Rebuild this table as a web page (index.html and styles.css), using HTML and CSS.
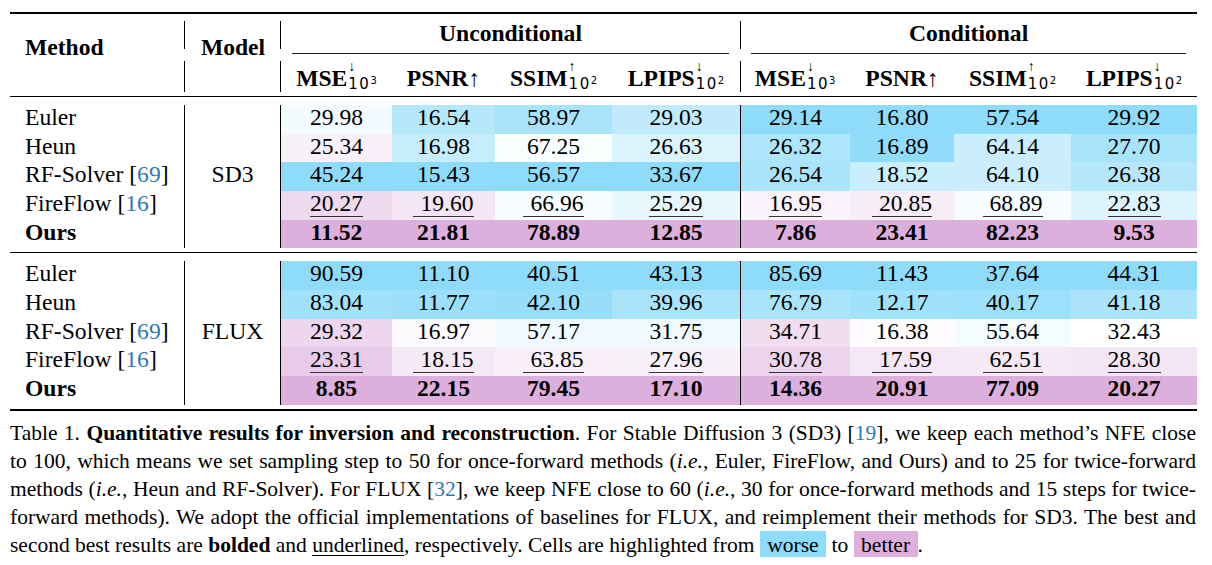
FILE: index.html
```html
<!DOCTYPE html>
<html lang="en">
<head>
<meta charset="utf-8">
<title>Table 1. Quantitative results for inversion and reconstruction</title>
<link rel="stylesheet" href="styles.css">
</head>
<body>
<main class="page">
<table class="results">
<colgroup>
<col class="c-method"><col class="c-model">
<col class="c-mse"><col class="c-psnr"><col class="c-ssim"><col class="c-lpips">
<col class="c-mse2"><col class="c-psnr2"><col class="c-ssim2"><col class="c-lpips2">
</colgroup>
<thead>
<tr class="h1">
<th rowspan="2" class="h-method seg-r">Method</th>
<th rowspan="2" class="h-model seg-r">Model</th>
<th colspan="4" class="h-group"><div class="lbl">Unconditional</div></th>
<th colspan="4" class="h-group seg-l1"><div class="lbl">Conditional</div></th>
</tr>
<tr class="h2">
<th>MSE<span class="ss"><span class="ss-up">↓</span><span class="ss-dn">10<sup>3</sup></span></span></th>
<th>PSNR<span class="arr">↑</span></th>
<th>SSIM<span class="ss"><span class="ss-up">↑</span><span class="ss-dn">10<sup>2</sup></span></span></th>
<th>LPIPS<span class="ss"><span class="ss-up">↓</span><span class="ss-dn">10<sup>2</sup></span></span></th>
<th class="seg-l2">MSE<span class="ss"><span class="ss-up">↓</span><span class="ss-dn">10<sup>3</sup></span></span></th>
<th>PSNR<span class="arr">↑</span></th>
<th>SSIM<span class="ss"><span class="ss-up">↑</span><span class="ss-dn">10<sup>2</sup></span></span></th>
<th>LPIPS<span class="ss"><span class="ss-up">↓</span><span class="ss-dn">10<sup>2</sup></span></span></th>
</tr>
</thead>
<tbody>
<tr class="gap-top"><td colspan="10"></td></tr>
<tr class="r">
<td class="m">Euler</td>
<td class="mdl" rowspan="5">SD3</td>
<td class="v b" style="--t:10%">29.98</td>
<td class="v b" style="--t:65%">16.54</td>
<td class="v b" style="--t:78%">58.97</td>
<td class="v b" style="--t:55%">29.03</td>
<td class="v b cs">29.14</td>
<td class="v b">16.80</td>
<td class="v b">57.54</td>
<td class="v b">29.92</td>
</tr>
<tr class="r">
<td class="m">Heun</td>
<td class="v p" style="--t:18%">25.34</td>
<td class="v b" style="--t:51%">16.98</td>
<td class="v b" style="--t:4%">67.25</td>
<td class="v b" style="--t:32%">26.63</td>
<td class="v b cs" style="--t:73%">26.32</td>
<td class="v b" style="--t:97%">16.89</td>
<td class="v b" style="--t:47%">64.14</td>
<td class="v b" style="--t:78%">27.70</td>
</tr>
<tr class="r">
<td class="m">RF-Solver [<span class="cite">69</span>]</td>
<td class="v b">45.24</td>
<td class="v b">15.43</td>
<td class="v b">56.57</td>
<td class="v b">33.67</td>
<td class="v b cs" style="--t:76%">26.54</td>
<td class="v b" style="--t:48%">18.52</td>
<td class="v b" style="--t:47%">64.10</td>
<td class="v b" style="--t:65%">26.38</td>
</tr>
<tr class="r">
<td class="m">FireFlow [<span class="cite">16</span>]</td>
<td class="v p" style="--t:48%"><span class="u">20.27</span></td>
<td class="v p" style="--t:31%"><span class="u lead">19.60</span></td>
<td class="v b" style="--t:7%"><span class="u lead">66.96</span></td>
<td class="v b" style="--t:20%"><span class="u">25.29</span></td>
<td class="v p cs" style="--t:15%"><span class="u">16.95</span></td>
<td class="v p" style="--t:23%"><span class="u lead">20.85</span></td>
<td class="v b" style="--t:8%"><span class="u lead">68.89</span></td>
<td class="v b" style="--t:30%"><span class="u">22.83</span></td>
</tr>
<tr class="r best">
<td class="m">Ours</td>
<td class="v p">11.52</td>
<td class="v p">21.81</td>
<td class="v p">78.89</td>
<td class="v p">12.85</td>
<td class="v p cs">7.86</td>
<td class="v p">23.41</td>
<td class="v p">82.23</td>
<td class="v p">9.53</td>
</tr>
<tr class="gap-bot"><td colspan="10"></td></tr>
</tbody>
<tbody>
<tr class="gap-top"><td colspan="10"></td></tr>
<tr class="r">
<td class="m">Euler</td>
<td class="mdl" rowspan="5">FLUX</td>
<td class="v b">90.59</td>
<td class="v b">11.10</td>
<td class="v b">40.51</td>
<td class="v b">43.13</td>
<td class="v b cs">85.69</td>
<td class="v b">11.43</td>
<td class="v b">37.64</td>
<td class="v b">44.31</td>
</tr>
<tr class="r">
<td class="m">Heun</td>
<td class="v b" style="--t:82%">83.04</td>
<td class="v b" style="--t:88%">11.77</td>
<td class="v b" style="--t:92%">42.10</td>
<td class="v b" style="--t:76%">39.96</td>
<td class="v b cs" style="--t:75%">76.79</td>
<td class="v b" style="--t:84%">12.17</td>
<td class="v b" style="--t:87%">40.17</td>
<td class="v b" style="--t:74%">41.18</td>
</tr>
<tr class="r">
<td class="m">RF-Solver [<span class="cite">69</span>]</td>
<td class="v p" style="--t:50%">29.32</td>
<td class="v p" style="--t:6%">16.97</td>
<td class="v b" style="--t:15%">57.17</td>
<td class="v b" style="--t:13%">31.75</td>
<td class="v p cs" style="--t:43%">34.71</td>
<td class="v p" style="--t:4%">16.38</td>
<td class="v b" style="--t:9%">55.64</td>
<td class="v b" style="--t:1%">32.43</td>
</tr>
<tr class="r">
<td class="m">FireFlow [<span class="cite">16</span>]</td>
<td class="v p" style="--t:65%"><span class="u">23.31</span></td>
<td class="v p" style="--t:28%"><span class="u lead">18.15</span></td>
<td class="v p" style="--t:20%"><span class="u lead">63.85</span></td>
<td class="v p" style="--t:17%"><span class="u">27.96</span></td>
<td class="v p cs" style="--t:54%"><span class="u">30.78</span></td>
<td class="v p" style="--t:30%"><span class="u lead">17.59</span></td>
<td class="v p" style="--t:26%"><span class="u lead">62.51</span></td>
<td class="v p" style="--t:33%"><span class="u">28.30</span></td>
</tr>
<tr class="r best">
<td class="m">Ours</td>
<td class="v p">8.85</td>
<td class="v p">22.15</td>
<td class="v p">79.45</td>
<td class="v p">17.10</td>
<td class="v p cs">14.36</td>
<td class="v p">20.91</td>
<td class="v p">77.09</td>
<td class="v p">20.27</td>
</tr>
<tr class="gap-bot gap-end"><td colspan="10"></td></tr>
</tbody>
</table>
<p class="caption">
<span class="cap-line">Table 1. <b>Quantitative results for inversion and reconstruction</b>. For Stable Diffusion 3 (SD3) [<span class="cite">19</span>], we keep each method’s NFE close</span>
<span class="cap-line">to 100, which means we set sampling step to 50 for once-forward methods (<i>i.e.</i>, Euler, FireFlow, and Ours) and to 25 for twice-forward</span>
<span class="cap-line">methods (<i>i.e.</i>, Heun and RF-Solver). For FLUX [<span class="cite">32</span>], we keep NFE close to 60 (<i>i.e.</i>, 30 for once-forward methods and 15 steps for twice-</span>
<span class="cap-line">forward methods). We adopt the official implementations of baselines for FLUX, and reimplement their methods for SD3. The best and</span>
<span class="cap-line last">second best results are <b>bolded</b> and <u>underlined</u>, respectively. Cells are highlighted from <span class="hl hl-worse">worse</span> to <span class="hl hl-better">better</span>.</span>
</p>
</main>
</body>
</html>
```

FILE: styles.css
```css
* { box-sizing: border-box; }

body {
  margin: 0;
  background: #fff;
  color: #000;
  font-family: "Liberation Serif", "Times New Roman", serif;
}

.page {
  width: 1212px;
  padding: 12px 0 0 10px;
}

/* ---------- table ---------- */
.results {
  width: 1187px;
  table-layout: fixed;
  border-collapse: separate;
  border-spacing: 0;
  font-size: 23.6px;
}

.c-method { width: 175px; }
.c-model  { width: 96px; }
.c-mse    { width: 111px; }
.c-psnr   { width: 103px; }
.c-ssim   { width: 117px; }
.c-lpips  { width: 128px; }
.c-mse2   { width: 110px; }
.c-psnr2  { width: 104px; }
.c-ssim2  { width: 117px; }
.c-lpips2 { width: 126px; }

.results th {
  padding: 0;
  font-weight: bold;
  vertical-align: top;
  text-align: center;
  white-space: nowrap;
}

.results .h1 th { border-top: 2px solid #000; }

.results th.h-method,
.results th.h-model {
  padding-top: 20px;
  line-height: 27px;
}
.results th.h-method { text-align: left; padding-left: 15px; }

.results th.h-group { padding-top: 6.4px; line-height: 27px; }
.h-group .lbl {
  margin: 0 11px;
  padding-bottom: 5.6px;
  border-bottom: 1px solid #222;
}

.results .h2 th {
  height: 42px;
  line-height: 27px;
  padding: 4.8px 0 0;
  vertical-align: baseline;
}

/* broken vertical rules in the header */
.results th.seg-r {
  background:
    linear-gradient(#000, #000) right 0 top 7px / 1px 28px no-repeat,
    linear-gradient(#000, #000) right 0 top 47px / 1px 31px no-repeat;
}
.results th.seg-l1 {
  background: linear-gradient(#000, #000) left 0 top 7px / 1px 28px no-repeat;
}
.results .h2 th.seg-l2 {
  background: linear-gradient(#000, #000) left 0 top 7px / 1px 31px no-repeat;
}

/* stacked super/subscript */
.ss {
  display: inline-block;
  vertical-align: -3px;
  text-align: left;
  font-weight: normal;
  margin-left: 1px;
}
.ss-up {
  display: block;
  font-size: 14px;
  line-height: 16px;
}
.ss-dn {
  display: block;
  font: 15px/18px "DejaVu Sans", sans-serif;
  letter-spacing: 1.5px;
}
.ss-dn sup {
  font-size: 10px;
  line-height: 0;
  vertical-align: 5px;
  letter-spacing: 0;
}
.arr { font-weight: normal; }

/* body */
.gap-top td {
  height: 9px;
  padding: 0;
  border-top: 1px solid #000;
  font-size: 0;
  line-height: 0;
}
.gap-bot td {
  height: 4px;
  padding: 0;
  font-size: 0;
  line-height: 0;
}
.gap-end td {
  height: 6px;
  border-bottom: 2px solid #000;
}

.r td {
  height: 28.7px;
  padding: 0;
  line-height: 25px;
  vertical-align: top;
  white-space: nowrap;
}
.r td.m {
  padding-left: 15px;
  border-right: 1px solid #000;
}
.r td.mdl {
  text-align: center;
  vertical-align: middle;
  padding-bottom: 4px;
  border-right: 1px solid #000;
}
.best td { font-weight: bold; }

.v {
  text-align: center;
  background-color: color-mix(in srgb, var(--c) var(--t, 100%), #fff);
}
.b { --c: #8edbfa; }
.p { --c: #dcafdc; }
.r td.cs { border-left: 1px solid #000; }

.u {
  display: inline-block;
  line-height: 1;
  border-bottom: 1px solid #333;
}
.u.lead { padding-left: 7px; }

.cite { color: #2e78b7; }

/* ---------- caption ---------- */
.caption {
  width: 1186px;
  margin: 8px 0 0;
  font-size: 21.5px;
  line-height: 28px;
}
.cap-line {
  display: block;
  text-align: justify;
  text-align-last: justify;
}
.cap-line.last { text-align-last: left; }
.caption u { text-underline-offset: 3px; text-decoration-thickness: 1px; }

.hl { padding: 2px 7.5px 0; }
.hl-worse { background: #8edbfa; }
.hl-better { background: #dcafdc; }
```
